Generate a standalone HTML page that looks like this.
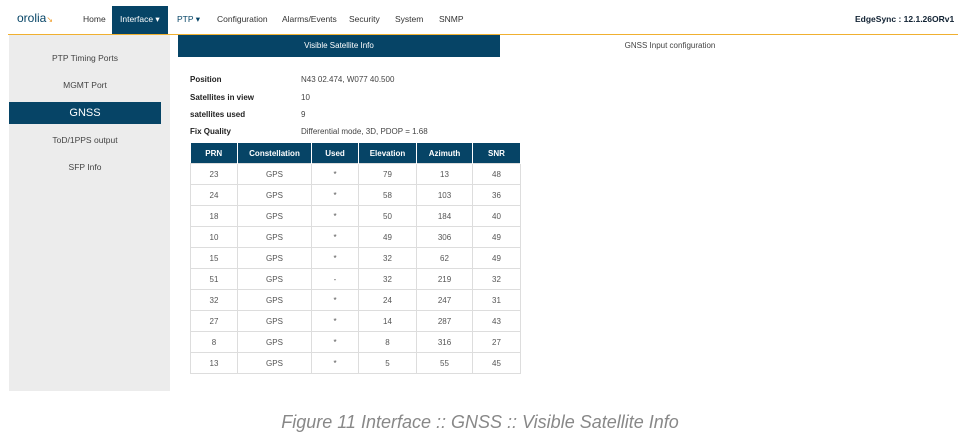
<!DOCTYPE html><html><head><style>
body{margin:0;width:960px;height:438px;background:#fff;font-family:"Liberation Sans",sans-serif;position:relative;overflow:hidden}
.a{position:absolute}
.nav{font-size:8.5px;color:#333;top:14px}
.side{left:9px;top:35px;width:161px;height:356px;background:#ececec}
.si{position:absolute;left:0;width:152px;text-align:center;font-size:8.5px;color:#444}
table{border-collapse:collapse;font-size:8px;position:absolute;left:190px;top:143px;table-layout:fixed;width:330px}
th{background:#064466;color:#fff;height:20px;padding:0;border-right:1px solid #fff;font-size:8px}
td{height:20px;padding:0;text-align:center;color:#555;border:1px solid #ddd}
.lbl{font-size:8px;color:#222;font-weight:bold;left:190px}
.val{font-size:8px;color:#444;left:301px}
</style></head><body>
<div class="a" style="left:17px;top:11px;font-size:12px;color:#064466">orolia<span style="color:#f0a030;font-size:8px">↘</span></div>
<div class="a nav" style="left:83px">Home</div>
<div class="a" style="left:112px;top:6px;width:56px;height:28px;background:#064466"></div>
<div class="a nav" style="left:120px;color:#fff">Interface ▾</div>
<div class="a nav" style="left:177px;color:#064466">PTP ▾</div>
<div class="a nav" style="left:217px">Configuration</div>
<div class="a nav" style="left:282px">Alarms/Events</div>
<div class="a nav" style="left:349px">Security</div>
<div class="a nav" style="left:395px">System</div>
<div class="a nav" style="left:439px">SNMP</div>
<div class="a" style="left:855px;top:14px;font-size:8.5px;font-weight:bold;color:#123">EdgeSync : 12.1.26ORv1</div>
<div class="a" style="left:8px;top:34px;width:950px;height:1px;background:#f0b030"></div>
<div class="a side">
<div class="si" style="top:18px">PTP Timing Ports</div>
<div class="si" style="top:45px">MGMT Port</div>
<div class="si" style="top:67px;height:22px;line-height:22px;background:#064466;color:#fff;font-size:11px">GNSS</div>
<div class="si" style="top:100px">ToD/1PPS output</div>
<div class="si" style="top:127px">SFP Info</div>
</div>
<div class="a" style="left:178px;top:35px;width:322px;height:22px;line-height:22px;background:#064466;color:#fff;font-size:8px;text-align:center">Visible Satellite Info</div>
<div class="a" style="left:500px;top:35px;width:340px;height:22px;line-height:22px;color:#444;font-size:8px;text-align:center">GNSS Input configuration</div>
<div class="a lbl" style="top:75px">Position</div><div class="a val" style="top:75px">N43 02.474, W077 40.500</div>
<div class="a lbl" style="top:93px">Satellites in view</div><div class="a val" style="top:93px">10</div>
<div class="a lbl" style="top:110px">satellites used</div><div class="a val" style="top:110px">9</div>
<div class="a lbl" style="top:127px">Fix Quality</div><div class="a val" style="top:127px">Differential mode, 3D, PDOP = 1.68</div>
<table>
<colgroup><col style="width:47px"><col style="width:74px"><col style="width:47px"><col style="width:58px"><col style="width:56px"><col style="width:48px"></colgroup>
<tr><th>PRN</th><th>Constellation</th><th>Used</th><th>Elevation</th><th>Azimuth</th><th>SNR</th></tr>
<tr><td>23</td><td>GPS</td><td>*</td><td>79</td><td>13</td><td>48</td></tr>
<tr><td>24</td><td>GPS</td><td>*</td><td>58</td><td>103</td><td>36</td></tr>
<tr><td>18</td><td>GPS</td><td>*</td><td>50</td><td>184</td><td>40</td></tr>
<tr><td>10</td><td>GPS</td><td>*</td><td>49</td><td>306</td><td>49</td></tr>
<tr><td>15</td><td>GPS</td><td>*</td><td>32</td><td>62</td><td>49</td></tr>
<tr><td>51</td><td>GPS</td><td>-</td><td>32</td><td>219</td><td>32</td></tr>
<tr><td>32</td><td>GPS</td><td>*</td><td>24</td><td>247</td><td>31</td></tr>
<tr><td>27</td><td>GPS</td><td>*</td><td>14</td><td>287</td><td>43</td></tr>
<tr><td>8</td><td>GPS</td><td>*</td><td>8</td><td>316</td><td>27</td></tr>
<tr><td>13</td><td>GPS</td><td>*</td><td>5</td><td>55</td><td>45</td></tr>
</table>
<div class="a" style="left:0;width:960px;top:412px;text-align:center;font-size:18px;font-style:italic;color:#888">Figure 11 Interface :: GNSS :: Visible Satellite Info</div>
</body></html>
